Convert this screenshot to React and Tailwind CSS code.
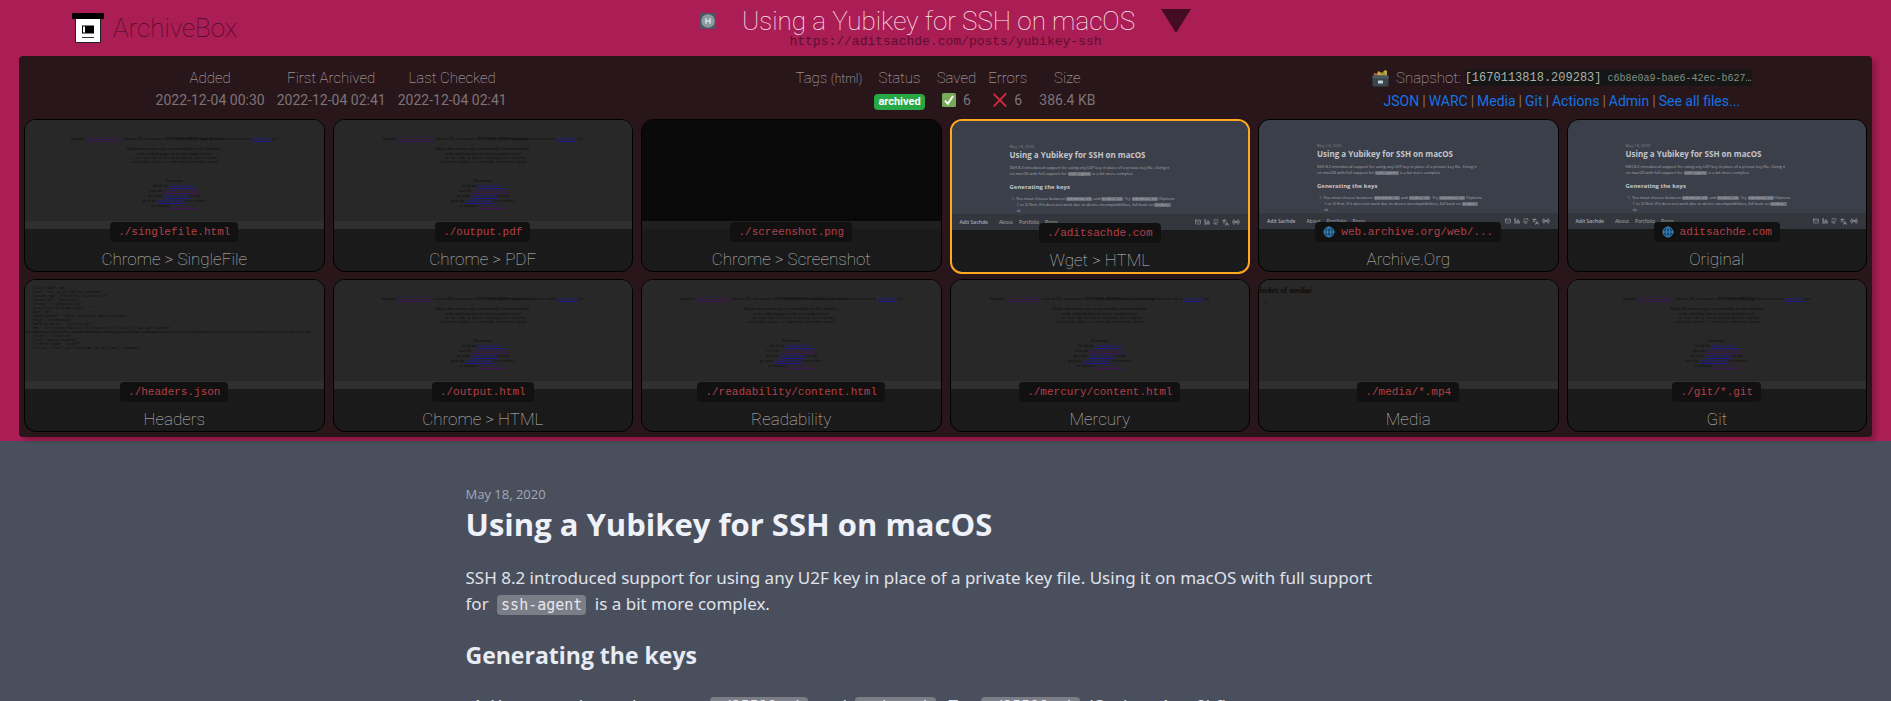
import React from "react";
import { Globe, Mail, Linkedin, Github, Languages, Radio } from "lucide-react";

const dates = [
  ["Added", "2022-12-04 00:30"],
  ["First Archived", "2022-12-04 02:41"],
  ["Last Checked", "2022-12-04 02:41"],
];

const links = ["JSON", "WARC", "Media", "Git", "Actions", "Admin", "See all files..."];

const cards = [
  { path: "./singlefile.html", title: "Chrome > SingleFile", file: "singlefile.html", kind: "missing" },
  { path: "./output.pdf", title: "Chrome > PDF", file: "output.pdf", kind: "missing" },
  { path: "./screenshot.png", title: "Chrome > Screenshot", kind: "blank" },
  { path: "./aditsachde.com", title: "Wget > HTML", kind: "page", selected: true },
  { path: "web.archive.org/web/...", title: "Archive.Org", kind: "page", remote: true },
  { path: "aditsachde.com", title: "Original", kind: "page", remote: true },
  { path: "./headers.json", title: "Headers", kind: "json" },
  { path: "./output.html", title: "Chrome > HTML", file: "output.html", kind: "missing" },
  { path: "./readability/content.html", title: "Readability", file: "readability/content.html", kind: "missing" },
  { path: "./mercury/content.html", title: "Mercury", file: "mercury/content.html", kind: "missing" },
  { path: "./media/*.mp4", title: "Media", kind: "index" },
  { path: "./git/*.git", title: "Git", file: "git/", kind: "missing" },
];

const headerLines = [
  '"Status-Code": 200,',
  '"Date": "Sun, 04 Dec 2022 02:41:09 GMT",',
  '"Content-Type": "text/html; charset=utf-8",',
  '"Connection": "keep-alive",',
  '"CF-Ray": "773f6b1b7c2f-YYZ",',
  '"Access-Control-Allow-Origin": "*",',
  '"Age": "0",',
  '"Cache-Control": "public, max-age=0, must-revalidate",',
  '"ETag": "W/37d3c4e2b8",',
  '"Referrer-Policy": "strict-origin",',
  '"NEL": "{\\"success_fraction\\":0,\\"report_to\\":\\"cf-nel\\",\\"max_age\\":604800}",',
];

function MissingThumb({ file }) {
  const blue = "text-[#1c1590] underline";
  const purple = "text-[#3f1458] underline";
  return (
    <div className="flex h-[101px] flex-col items-center whitespace-nowrap bg-[#282828] pt-[16px] text-center font-['Liberation_Serif',serif] text-[4px] leading-[5px] text-[#0c0c0c]">
      <p>
        Snapshot <span className={purple}>[1670113818.209283]</span> exists in DB, but resource{" "}
        <b>1670113818.209283/{file}</b> does not exist in <span className={blue}>snapshot dir</span> yet.
      </p>
      <p className="mt-[5px]">
        Maybe this resource type is not available for this Snapshot,
        <br />
        or the archiving process has not completed yet?
      </p>
      <p className="mt-px font-['Liberation_Mono',monospace] text-[3px] leading-[4px]">
        # run this cmd to finish archiving this Snapshot
        <br />
        archivebox update -t timestamp 1670113818.209283
      </p>
      <div className="mt-[13px]">
        <p>Next steps:</p>
        <p>list all the <span className={blue}>Snapshot files .*</span></p>
        <p>view the <span className={purple}>Snapshot ./index.html</span></p>
        <p>go to the <span className={blue}>Snapshot admin</span> to edit</p>
        <p>go to the <span className={blue}>Snapshot actions</span> to re-archive</p>
        <p>or return to <span className={purple}>the main index...</span></p>
      </div>
    </div>
  );
}

function PageThumb() {
  const code = "rounded-[1px] bg-[#6b6e77] px-px font-['Liberation_Mono',monospace]";
  return (
    <div className="flex h-[109px] flex-col bg-[#3b3f49] font-['Open_Sans',sans-serif] text-[#a9acb4]">
      <div className="h-[93px] overflow-hidden whitespace-nowrap pl-[58px] pt-[23px] text-[4px] leading-[6px]">
        <p className="text-[#80848e]">May 18, 2020</p>
        <p className="text-[8px] font-bold leading-[10px] text-[#c3c6cd]">Using a Yubikey for SSH on macOS</p>
        <p className="mt-[5px]">
          SSH 8.2 introduced support for using any U2F key in place of a private key file. Using it
          <br />
          on macOS with full support for <span className={code}>ssh-agent</span> is a bit more complex.
        </p>
        <p className="mt-[6px] text-[6px] font-bold leading-[8px] text-[#c3c6cd]">Generating the keys</p>
        <p className="mt-[5px] pl-[2px]">
          1. You must choose between <span className={code}>ed25519.sk</span> and <span className={code}>ecdsa.sk</span>. Try{" "}
          <span className={code}>ed25519.sk</span> (Options
          <br />
          <span className="pl-[5px]">1 or 2) first. If it does not work due to device incompatibilities, fall back on <span className={code}>ecdsa.</span></span>
          <br />
          <span className="pl-[5px]">sk</span>
        </p>
      </div>
      <div className="flex h-[16px] items-center gap-[6px] bg-[#33363d] px-[8px] text-[5px] leading-[6px]">
        <span className="mr-[5px] font-semibold">Adit Sachde</span>
        <span>About</span>
        <span>Portfolio</span>
        <span>Posts</span>
        <span className="ml-auto flex items-center gap-[3px]">
          <Mail size={6} />
          <Linkedin size={6} />
          <Github size={6} />
          <Languages size={7} />
          <Radio size={8} />
        </span>
      </div>
    </div>
  );
}

function JsonThumb() {
  return (
    <div className="h-[101px] overflow-hidden bg-[#282828] pt-[7px] font-['Liberation_Mono',monospace] text-[3px] leading-[4px] text-[#0c0c0c]">
      <div className="whitespace-nowrap pl-[7px]">
        {headerLines.map((l) => <p key={l}>{l}</p>)}
      </div>
      <p className="whitespace-nowrap">
        s=hX7q0dJb2wKfT4nZlR8vM1cYpE5aUo3iGsB9xQ6kN%2FtHjLwD7eVzC0yP4mAfS2uR8bWqI5oXgK1nTZcE3vJhYdMl6pFsQ9aUkB7rGxO4tN2wLiHe8jVzC5yDmPfA%2Bq3uSbW1oXgK6nTZcR0vJhYdMl9pF
      </p>
      <div className="whitespace-nowrap pl-[7px]">
        <p>"Server": "cloudflare",</p>
        <p>"Vary": "Accept-Encoding",</p>
        <p>"X-Content-Type": "nosniff",</p>
        <p>"alt-svc": "h3=\":443\"; ma=86400, h3-29=\":443\"; ma=86400"</p>
      </div>
    </div>
  );
}

function Thumb({ card }) {
  if (card.kind === "page") return <PageThumb />;
  return (
    <div className={card.kind === "blank" ? "h-[109px] bg-[#1f1f1f]" : "h-[109px] bg-[#2f2f2f]"}>
      {card.kind === "missing" && <MissingThumb file={card.file} />}
      {card.kind === "json" && <JsonThumb />}
      {card.kind === "blank" && <div className="h-[101px] bg-[#090909]" />}
      {card.kind === "index" && (
        <div className="h-[101px] bg-[#282828] pt-[6px] font-['Liberation_Serif',serif] text-[8px] font-bold leading-[10px] text-[#0c0c0c]">
          <p>Index of media/</p>
          <p className="pl-[6px]">.</p>
        </div>
      )}
    </div>
  );
}

function Card({ card }) {
  return (
    <article
      className={
        card.selected
          ? "overflow-hidden rounded-xl border-2 border-[#ffa820] bg-[#1a1a1a]"
          : "overflow-hidden rounded-xl border border-black bg-[#1a1a1a]"
      }
    >
      <Thumb card={card} />
      <div className="relative -mt-[7px] flex flex-col items-center pb-px">
        <a
          href="#preview"
          className="flex h-[20px] items-center gap-[6px] rounded-[4px] bg-[#111111] px-[8px] font-['Liberation_Mono',monospace] text-[11px] text-[#b3404a]"
        >
          {card.remote && <Globe size={12} className="fill-[#17456b] text-[#3d83b8]" />}
          {card.path}
        </a>
        <h2 className="mt-[6px] text-[17px] font-thin leading-[22px] text-[#c4c4c4]">{card.title}</h2>
      </div>
    </article>
  );
}

function Stat({ label, children }) {
  return (
    <div className="flex flex-col items-center">
      <span className="text-[15px] font-thin leading-[22px] text-[#c4bcbe]">{label}</span>
      <span className="flex h-[22px] items-center gap-[7px] text-[14px] text-[#7d7477]">{children}</span>
    </div>
  );
}

export default function App() {
  const code = "rounded-[4px] bg-[#7b7d87] px-[4px] py-px font-['DejaVu_Sans_Mono',monospace] text-[15px] text-[#e5e7ee]";
  return (
    <div className="flex h-screen flex-col overflow-hidden bg-[#4a4f5d] font-['Roboto',sans-serif]">
      <header className="bg-[#aa1e55] px-[19px] pb-[4px]">
        <div className="grid h-[56px] grid-cols-3">
          <a href="#home" className="flex items-center gap-[9px] pl-[53px] text-[26px] font-thin text-[#4a0a26]">
            <svg viewBox="0 0 32 30" className="h-[30px] w-[32px]">
              <rect x="3.5" y="3" width="25" height="26.5" fill="#fff" stroke="#222" strokeWidth="1" />
              <rect x="0" y="0" width="32" height="6" rx="1" fill="#000" />
              <rect x="10" y="12.5" width="12" height="8" fill="#000" />
              <rect x="11" y="13.5" width="2" height="6" fill="#fff" />
              <rect x="10" y="24" width="12" height="1" fill="#333" />
            </svg>
            ArchiveBox
          </a>
          <div className="flex flex-col items-center pt-[6px]">
            <div className="flex h-[30px] items-center justify-center gap-[26px]">
              <svg viewBox="0 0 16 16" className="h-[16px] w-[16px] shrink-0">
                <rect width="16" height="16" fill="#4f5566" />
                <circle cx="8" cy="8" r="6.8" fill="#8b9c9f" />
                <path d="M6 5.2v5.6M10 5.2v5.6M6 8h4" stroke="#eef" strokeWidth="1.2" />
              </svg>
              <h1 className="whitespace-nowrap text-[26px] font-thin leading-[30px] text-[#ffeaf2]">Using a Yubikey for SSH on macOS</h1>
              <button type="button" aria-label="Toggle details" className="h-[30px]">
                <svg viewBox="0 0 30 24" className="h-[24px] w-[30px]">
                  <path d="M0 0H30L15 24Z" fill="#430c21" />
                </svg>
              </button>
            </div>
            <a href="#source" className="-mt-px font-['Liberation_Mono',monospace] text-[13px] leading-[13px] text-[#5c0f2f]">
              https://aditsachde.com/posts/yubikey-ssh
            </a>
          </div>
          <div />
        </div>

        <div className="rounded-[4px] bg-[#28161b] px-[5px] pb-[5px] pt-[11px] shadow-[4px_4px_4px_rgba(0,0,0,0.2)]">
          <div className="grid h-[52px] grid-cols-3 items-start">
            <div className="flex justify-center gap-[12px]">
              {dates.map(([label, value]) => (
                <Stat key={label} label={label}>{value}</Stat>
              ))}
            </div>
            <div className="flex justify-center gap-[12px]">
              <Stat label={<>Tags <span className="text-[12px] font-light text-[#8b8083]">(html)</span></>} />
              <Stat label="Status">
                <span className="mt-[3px] rounded-[4px] bg-[#28a745] px-[4px] text-[11px] font-bold leading-[16px] text-white">archived</span>
              </Stat>
              <Stat label="Saved">
                <svg viewBox="0 0 14 14" className="h-[14px] w-[14px]">
                  <rect width="14" height="14" rx="1.5" fill="#78a85a" />
                  <path d="M3 7.6 5.8 10.8 11 3" fill="none" stroke="#fff" strokeWidth="1.9" />
                </svg>
                6
              </Stat>
              <Stat label="Errors">
                <svg viewBox="0 0 14 14" className="h-[14px] w-[14px]">
                  <path d="M1.2 1.5 12.6 12.8M12.6 1 1.2 12.8" fill="none" stroke="#cf2c42" strokeWidth="1.8" strokeLinecap="round" />
                </svg>
                6
              </Stat>
              <Stat label="Size">386.4 KB</Stat>
            </div>
            <div className="flex flex-col items-center pl-[4px]">
              <div className="flex h-[22px] items-center gap-[4px] text-[15px] font-thin text-[#c4bcbe]">
                <svg viewBox="0 0 17 17" className="mr-[3px] h-[17px] w-[17px]">
                  <path d="M2 6V3L5 4 6 1 10 3 13 0 15 1V6Z" fill="#c9a53b" />
                  <path d="M1 5 4 3 6 6Z" fill="#b8473a" />
                  <path d="M9 4 12 2 13 5Z" fill="#6d9c4c" />
                  <rect x="0.5" y="5.5" width="16" height="11" rx="1" fill="#39464d" />
                  <rect x="0.5" y="5.5" width="16" height="3" fill="#4a5960" />
                  <rect x="6" y="10.5" width="5" height="3" rx="0.6" fill="#c9cfd2" />
                </svg>
                Snapshot:
                <span className="flex h-[16px] items-center gap-[6px] bg-[#161616] font-['Liberation_Mono',monospace] font-normal">
                  <span className="text-[12px] text-[#a9b3a9]">[1670113818.209283]</span>
                  <span className="text-[10px] text-[#849184]">c6b8e0a9-bae6-42ec-b627…</span>
                </span>
              </div>
              <nav className="flex h-[24px] items-center gap-[3px] text-[14px] text-[#8b6f5f]">
                {links.map((l, i) => (
                  <React.Fragment key={l}>
                    {i > 0 && <span className="font-normal">|</span>}
                    <a href="#files" className="text-[#1474e4]">{l}</a>
                  </React.Fragment>
                ))}
              </nav>
            </div>
          </div>

          <div className="grid grid-cols-6 items-start gap-x-[8px] gap-y-[5px]">
            {cards.map((c) => <Card key={c.title} card={c} />)}
          </div>
        </div>
      </header>

      <main className="mx-auto min-h-0 w-full max-w-[960px] flex-1 overflow-hidden pt-[43px] font-['Open_Sans',sans-serif] text-[#e0e3eb]">
        <p className="text-[13px] leading-[20px] text-[#a3a8b4]">May 18, 2020</p>
        <h1 className="text-[31px] font-bold leading-[40px] text-[#eef1f8]">Using a Yubikey for SSH on macOS</h1>
        <p className="mt-[21px] font-['Noto_Sans',sans-serif] text-[17px] leading-[26px]">
          SSH 8.2 introduced support for using any U2F key in place of a private key file. Using it on macOS with full support
          <br />
          for <code className={`mx-[4px] ${code}`}>ssh-agent</code> is a bit more complex.
        </p>
        <h2 className="mt-[21px] text-[23px] font-bold leading-[32px] text-[#e8ebf3]">Generating the keys</h2>
        <ol className="mt-[22px] list-decimal pl-[26px] font-['Noto_Sans',sans-serif] text-[17px] leading-[26px]">
          <li>
            You must choose between <code className={`mx-[4px] ${code}`}>ed25519.sk</code> and{" "}
            <code className={`mx-[4px] ${code}`}>ecdsa.sk</code>. Try <code className={`mx-[4px] ${code}`}>ed25519.sk</code> (Options 1 or 2) first.
          </li>
        </ol>
      </main>
    </div>
  );
}
